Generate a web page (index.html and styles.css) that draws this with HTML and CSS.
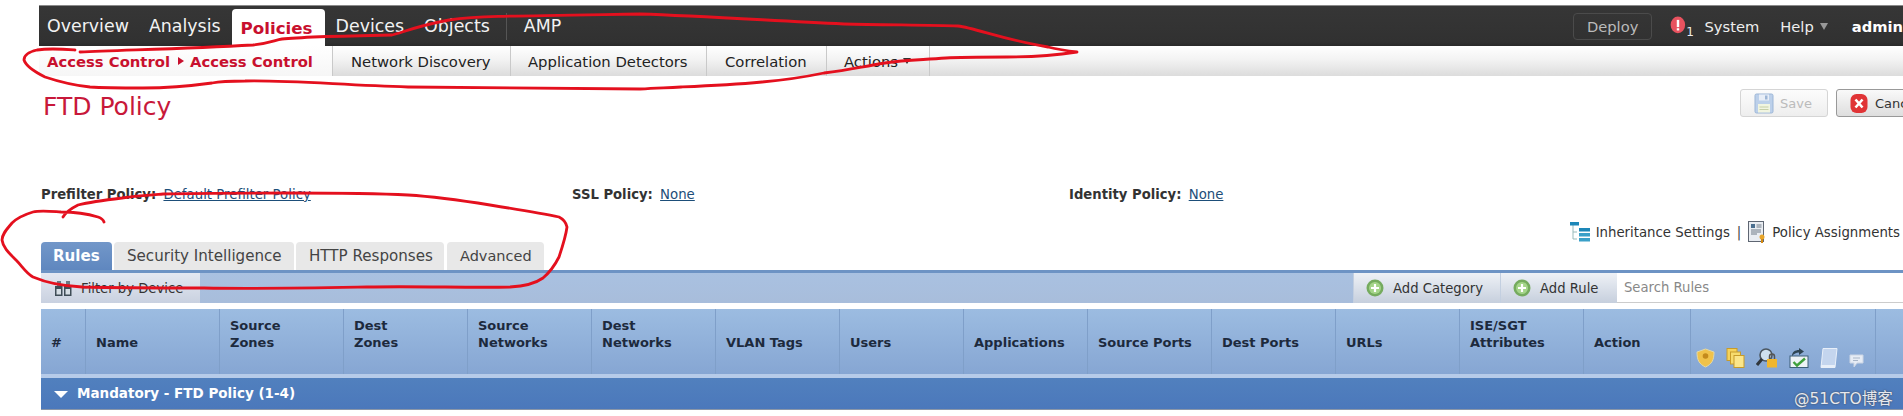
FILE: index.html
```html
<!DOCTYPE html>
<html lang="en">
<head>
<meta charset="utf-8">
<title>FTD Policy</title>
<link rel="stylesheet" href="styles.css">
</head>
<body>
<div class="app">
  <header class="topbar">
    <nav class="mainnav">
      <span class="nav-first">Overview</span>
      <span>Analysis</span>
      <span class="nav-active">Policies</span>
      <span>Devices</span>
      <span>Objects</span>
      <span class="nav-amp">AMP</span>
    </nav>
    <div class="usernav">
      <span class="deploy">Deploy</span>
      <span class="alert">
        <svg width="18" height="20" viewBox="0 0 16 18"><ellipse cx="7" cy="8" rx="6.500" ry="7.500" fill="#e8525f"/><rect x="6" y="3.500" width="2.200" height="6.500" fill="#fff"/><rect x="6" y="11" width="2.200" height="2" fill="#fff"/></svg>
        <span class="alert-count">1</span>
      </span>
      <span class="system">System</span>
      <span class="help">Help <i class="caret-grey"></i></span>
      <b class="admin">admin</b>
    </div>
  </header>
  <div class="subnav">
    <div class="crumb"><b>Access Control</b><i class="crumb-arrow"></i><b>Access Control</b></div>
    <span class="sub-item sub-nd">Network Discovery</span>
    <span class="sub-item sub-ad">Application Detectors</span>
    <span class="sub-item sub-co">Correlation</span>
    <span class="sub-item sub-ac">Actions <i class="caret-dark"></i></span>
  </div>
  <main class="content">
    <div class="headrow">
      <h1>FTD Policy</h1>
      <div class="actions">
        <span class="btn btn-off">
          <svg width="20" height="21" viewBox="0 0 20 21"><rect x="1" y="1" width="18" height="19" rx="1.500" fill="#bcd0ea" stroke="#9db6d6"/><rect x="5" y="1.500" width="10" height="6" fill="#e8eef7"/><rect x="11" y="2.500" width="2.500" height="4" fill="#9db6d6"/><rect x="4" y="11" width="12" height="8.500" fill="#f1f5e0"/><path d="M5.500 14h9M5.500 16.500h9" stroke="#c6cfa8"/></svg>
          Save
        </span>
        <span class="btn btn-cancel">
          <svg width="18" height="21" viewBox="0 0 18 21"><rect x="0.500" y="1" width="17" height="19" rx="6" fill="#e03436"/><path d="M5.500 6.500l7 8M12.500 6.500l-7 8" stroke="#fff" stroke-width="2.600"/></svg>
          Cancel
        </span>
      </div>
    </div>
    <div class="policies">
      <span class="pol pol-a"><b>Prefilter Policy:</b> <a>Default Prefilter Policy</a></span>
      <span class="pol pol-b"><b>SSL Policy:</b> <a>None</a></span>
      <span class="pol"><b>Identity Policy:</b> <a>None</a></span>
    </div>
    <div class="links">
      <svg width="20" height="20" viewBox="0 0 20 20"><path d="M3 3v14h4M3 10h4" stroke="#9bb" fill="none"/><rect x="0" y="0" width="9" height="3.500" fill="#1d87b8"/><rect x="9" y="6" width="11" height="3.500" fill="#1d87b8"/><rect x="9" y="11" width="11" height="3.500" fill="#3aa0c8"/><rect x="9" y="16" width="11" height="3.500" fill="#3aa0c8"/></svg>
      <span class="link-txt">Inheritance Settings</span>
      <span class="pipe">|</span>
      <svg width="18" height="23" viewBox="0 0 18 23"><rect x="0.500" y="0.500" width="15" height="20" fill="#e9edf2" stroke="#5e6672"/><rect x="3" y="3" width="4" height="4" fill="#4b6f8f"/><path d="M8.500 4h5M8.500 6h5M3 9h10M3 11h10M3 13h6" stroke="#6f7a86"/><circle cx="14" cy="16" r="2.500" fill="#e8a52a"/><path d="M13 18v4h2v-4" fill="#d48a12"/></svg>
      <span class="link-txt">Policy Assignments</span>
    </div>
    <div class="tabs">
      <span class="tab tab-on">Rules</span>
      <span class="tab tab-si">Security Intelligence</span>
      <span class="tab tab-http">HTTP Responses</span>
      <span class="tab tab-adv">Advanced</span>
    </div>
    <div class="toolbar">
      <span class="filter">
        <svg width="17" height="15" viewBox="0 0 17 15"><rect x="0" y="5" width="7.500" height="10" fill="#3f4d57"/><rect x="9" y="5" width="7.500" height="10" fill="#3f4d57"/><rect x="2" y="0" width="4" height="5" fill="#6a7985"/><rect x="11" y="0" width="4" height="5" fill="#6a7985"/><rect x="1.500" y="8" width="4.500" height="5.500" fill="#d6dee5"/><rect x="10.500" y="8" width="4.500" height="5.500" fill="#d6dee5"/></svg>
        Filter by Device
      </span>
      <div class="tool-right">
        <span class="tool tool-cat">
          <svg class="plus" width="18" height="18" viewBox="0 0 18 18"><circle cx="9" cy="9" r="8.500" fill="#75ab5e"/><circle cx="9" cy="9" r="6" fill="#a5d58a"/><path d="M9 5v8M5 9h8" stroke="#fff" stroke-width="2.200"/></svg>
          Add Category
        </span>
        <span class="tool tool-rule">
          <svg class="plus" width="18" height="18" viewBox="0 0 18 18"><circle cx="9" cy="9" r="8.500" fill="#75ab5e"/><circle cx="9" cy="9" r="6" fill="#a5d58a"/><path d="M9 5v8M5 9h8" stroke="#fff" stroke-width="2.200"/></svg>
          Add Rule
        </span>
        <span class="search">Search Rules</span>
      </div>
    </div>
    <div class="thead">
      <div class="th">#</div>
      <div class="th">Name</div>
      <div class="th th2">Source<br>Zones</div>
      <div class="th th2">Dest<br>Zones</div>
      <div class="th th2">Source<br>Networks</div>
      <div class="th th2">Dest<br>Networks</div>
      <div class="th">VLAN Tags</div>
      <div class="th">Users</div>
      <div class="th">Applications</div>
      <div class="th">Source Ports</div>
      <div class="th">Dest Ports</div>
      <div class="th">URLs</div>
      <div class="th th2">ISE/SGT<br>Attributes</div>
      <div class="th">Action</div>
      <div class="th th-icons">
        <svg width="19" height="20" viewBox="0 0 19 20"><path d="M9.500 1l8.500 3c0 8-2 12-8.500 15C3 16 1 12 1 4z" fill="#f0c24a" stroke="#e3d9a8"/><circle cx="9.500" cy="8" r="2.800" fill="#c48a1c"/></svg>
        <svg width="19" height="20" viewBox="0 0 19 20"><rect x="1" y="0.500" width="10" height="12" fill="#f5d35c" stroke="#c79b2a"/><rect x="4.500" y="4" width="10" height="12" fill="#f7dc6e" stroke="#c79b2a"/><rect x="8" y="7.500" width="10" height="12" fill="#fbe68a" stroke="#c79b2a"/></svg>
        <svg width="22" height="20" viewBox="0 0 22 20"><circle cx="10" cy="7" r="6" fill="#cfe0ee" stroke="#4b5660" stroke-width="1.600"/><path d="M6 11l-5 6" stroke="#30363c" stroke-width="3"/><rect x="11" y="11" width="10" height="8.500" fill="#f1b62d"/><path d="M13.500 11V8.500a2.500 2.500 0 015 0V11" fill="none" stroke="#555" stroke-width="1.500"/></svg>
        <svg width="20" height="20" viewBox="0 0 20 20"><rect x="1" y="8" width="18" height="11.500" fill="#eef3f6" stroke="#3c5f78"/><path d="M4.500 14l3.500 3.500 8-7" fill="none" stroke="#3fa03c" stroke-width="2.400"/><path d="M3 8c0-4 3-6 7-6V0l5 3.500L10 7V4.500C7 4.500 5 6 3 8z" fill="#2f4553"/></svg>
        <svg width="18" height="20" viewBox="0 0 18 20"><path d="M3 0.500h14L15 19.500H1z" fill="#c4d5ee" stroke="#e8eff9"/><path d="M1 17h14v2.500H1z" fill="#e8eff9"/></svg>
        <svg width="15" height="14" viewBox="0 0 15 14"><path d="M1 1h13v8H8l-3 4V9H1z" fill="#e6ecf5" stroke="#cbd5e4"/><path d="M4 4h7M4 6.500h5" stroke="#a9b6c8"/></svg>
      </div>
      <div class="th th-end"></div>
    </div>
    <div class="group">
      <i class="group-caret"></i>
      <b>Mandatory - FTD Policy (1-4)</b>
      <span class="watermark">@51CTO博客</span>
    </div>
  </main>
</div>
<svg class="ink" width="1903" height="416" viewBox="0 0 1903 416">
  <path d="M80 52 C120 50 184 49 253 45 C270 43 275 40 282 39 C300 37 340 36 392 35 C402 33 412 27 449 20 C480 16 506 16 640 14 C700 16 762 20 844 24 C880 25 930 25 958 26 C975 28 1005 40 1048 47 C1060 50 1068 51 1077 52 C1050 56 1030 57 1007 57 C980 57 960 57 946 58 C920 60 905 60 885 63 C860 67 850 70 824 73 C800 78 785 80 762 82 C730 85 705 86 681 87 C660 88 655 88 640 89 C560 88 480 88 408 87 C340 85 290 80 245 81 C230 81 222 81 212 83 C190 86 170 88 143 88 C120 88 105 88 90 87 C70 85 57 81 45 77 C35 72 26 66 24 60 C24 55 28 52 37 50 C50 48 62 49 75 50"/>
  <path d="M104 222 C103 219 101 218 98 217 C88 214 75 212 61 212 C48 211 40 210 33 212 C23 215 16 219 12 223 C7 229 2 234 2 240 C3 248 10 254 16 260 C22 266 26 273 33 277 C47 283 62 286 82 287 C120 288 160 288 204 288 C260 289 310 288 367 287 C420 286 470 288 510 287 C528 286 536 283 543 278 C550 272 555 265 559 257 C563 245 566 235 567 227 C566 222 563 219 559 217 C540 213 515 209 490 205 C465 201 440 197 408 195 C370 193 330 193 286 193 C240 193 200 193 163 194 C150 195 135 196 122 198 C105 200 90 202 78 205 C70 209 66 212 63 217"/>
</svg>
</body>
</html>
```

FILE: styles.css
```css
html, body { margin: 0; padding: 0; background: #fff; overflow: hidden; }
body { position: relative; width: 1903px; height: 416px; font-family: "DejaVu Sans", "Liberation Sans", sans-serif; color: #333; }
.app { width: 1864px; height: 416px; margin-left: 39px; padding-top: 5px; box-sizing: border-box; overflow: hidden; }

.topbar { display: flex; justify-content: space-between; height: 41px; box-sizing: border-box; background: linear-gradient(#363636, #313131 90%, #2a2a2a); border-top: 1px solid #8a8a8a; overflow: hidden; }
.mainnav { display: flex; align-items: center; gap: 20px; font-size: 17.4px; color: #f2f2f2; padding-left: 8px; }
.nav-active { align-self: flex-end; display: flex; align-items: center; height: 37px; margin: 0 -9px 0 -9px; padding: 0 12px 0 9px; background: #fff; border-radius: 4px 4px 0 0; color: #c8102e; font-weight: bold; font-size: 16.7px; }
.nav-amp { margin-left: -4px; padding-left: 17px; border-left: 1px solid #555; line-height: 27px; }
.usernav { display: flex; align-items: center; font-size: 14.7px; color: #eee; width: 330px; flex: none; box-sizing: border-box; }
.deploy { box-sizing: border-box; width: 90px; height: 27px; line-height: 25px; text-align: center; border: 1px solid #4b4b4b; border-radius: 4px; color: #bbb; }
.alert { position: relative; display: flex; margin-left: 18px; width: 39px; }
.alert-count { position: absolute; left: 16px; top: 9px; font-size: 12px; color: #eee; }
.help { margin-left: 21px; display: flex; align-items: center; gap: 6px; }
.caret-grey { width: 0; height: 0; border: 4.500px solid transparent; border-top: 7px solid #999; border-bottom: 0; }
.admin { margin-left: 24px; font-size: 14.7px; color: #fff; }

.subnav { display: flex; height: 30px; align-items: stretch; font-size: 14.8px; color: #222; background: linear-gradient(#fff, #f3f3f3 45%, #dcdcdc); }
.crumb { box-sizing: border-box; width: 293px; padding-left: 8px; display: flex; align-items: center; background: linear-gradient(#fff, #f6f6f6); color: #c8102e; font-size: 14.8px; }
.crumb-arrow { width: 0; height: 0; margin: 0 6px 0 8px; border: 4px solid transparent; border-left: 6px solid #c8102e; border-right: 0; }
.sub-item { display: flex; align-items: center; box-sizing: border-box; border-left: 1px solid #c9c9c9; }
.sub-nd { width: 178px; padding-left: 18px; }
.sub-ad { width: 196px; padding-left: 17px; }
.sub-co { width: 120px; padding-left: 18px; }
.sub-ac { padding-left: 17px; border-right: 1px solid #c9c9c9; box-sizing: content-box; width: 85px; }
.caret-dark { width: 0; height: 0; margin-left: 5px; border: 4px solid transparent; border-top: 6px solid #333; border-bottom: 0; }

.content { padding-left: 2px; }
.headrow { display: flex; justify-content: space-between; margin: 13px -23px 0 0; height: 28px; }
h1 { margin: 4px 0 0 2px; font-size: 25px; line-height: 28px; font-weight: normal; color: #c8183a; }
.actions { display: flex; gap: 8px; }
.btn { display: flex; align-items: center; box-sizing: border-box; height: 28px; border-radius: 3px; font-size: 13px; }
.btn-off { width: 88px; padding-left: 13px; gap: 6px; border: 1px solid #d5d5d5; background: linear-gradient(#fcfcfc, #eee); color: #bbb; }
.btn-cancel { width: 90px; padding-left: 13px; gap: 7px; border: 1px solid #999; background: linear-gradient(#f9f9f9, #dedede); color: #333; }

.policies { display: flex; margin-top: 69px; height: 16px; align-items: center; font-size: 13.3px; color: #333; }
.pol b { font-size: 13.2px; }
.pol a { margin-left: 3px; text-decoration: underline; color: #1d4e79; }
.pol-a { width: 531px; }
.pol-b { width: 497px; }

.links { display: flex; justify-content: flex-end; align-items: center; gap: 6px; height: 16px; margin-top: 22px; padding-right: 3px; font-size: 13.3px; color: #333; }
.pipe { margin: 0 1px; color: #444; }

.tabs { display: flex; gap: 2px; height: 28px; margin-top: 2px; font-size: 15.1px; }
.tab { display: flex; align-items: center; box-sizing: border-box; border-radius: 4px 4px 0 0; padding-left: 13px; background: #e8e8e8; color: #444; }
.tab-on { width: 71px; padding-left: 12px; background: linear-gradient(#7297c9, #5f87bf); color: #fff; font-weight: bold; }
.tab-si { width: 180px; }
.tab-http { width: 148px; }
.tab-adv { width: 97px; margin-left: 1px; font-size: 14.5px; }

.toolbar { display: flex; justify-content: space-between; box-sizing: border-box; height: 33px; border-top: 3px solid #6d93c4; background: linear-gradient(#a9c1e1, #a8bddb); font-size: 13.2px; }
.filter { display: flex; align-items: center; box-sizing: border-box; width: 159px; padding-left: 14px; gap: 9px; background: linear-gradient(#e4e8f1, #c9d1e0); color: #333; }
.tool-right { display: flex; }
.tool { display: flex; align-items: center; box-sizing: border-box; padding-left: 12px; gap: 9px; border-left: 1px solid #c3cfe0; background: linear-gradient(#eef1f6, #c6cfdd); color: #333; }
.tool-cat { width: 147px; }
.tool-rule { width: 117px; }
.search { box-sizing: border-box; width: 286px; padding-left: 7px; line-height: 30px; background: #fff; border-bottom: 1px solid #ccc; color: #888; }

.thead { display: grid; grid-template-columns: 45px 134px repeat(11, 124px) 107px 185px 27px; height: 69px; margin-top: 6px; box-sizing: border-box; border-bottom: 4px solid #b6cbe9; background: linear-gradient(#9cbce1, #86a6d3); font-size: 13px; font-weight: bold; line-height: 17px; color: #1d2a3d; }
.th { display: flex; align-items: center; box-sizing: border-box; padding: 1px 0 0 10px; border-right: 1px solid #7f9fc9; }
.th2 { display: block; padding-top: 8px; }
.th-icons { align-items: flex-end; padding: 0 0 6px 5px; gap: 11px; }
.th-icons svg { flex: none; }
.th-end { border-right: 0; }

.group { position: relative; display: flex; align-items: center; height: 32px; box-sizing: border-box; padding: 0 0 2px 13px; gap: 9px; background: linear-gradient(#5180be, #4b78bb); border-bottom: 1px solid #8a96a8; color: #fff; font-size: 13.5px; }
.group-caret { width: 0; height: 0; margin-top: 3px; border: 7px solid transparent; border-top: 7px solid #fff; border-bottom: 0; }
.watermark { position: absolute; left: 1753px; top: 11px; font-family: "DejaVu Sans", "Noto Sans CJK SC", sans-serif; font-size: 15.5px; line-height: 20px; color: #e6e8ee; text-shadow: 0 0 2px #444; }

.ink { position: absolute; left: 0; top: 0; pointer-events: none; }
.ink path { fill: none; stroke: #e4101e; stroke-width: 2.800; stroke-linecap: round; stroke-linejoin: round; }
```
